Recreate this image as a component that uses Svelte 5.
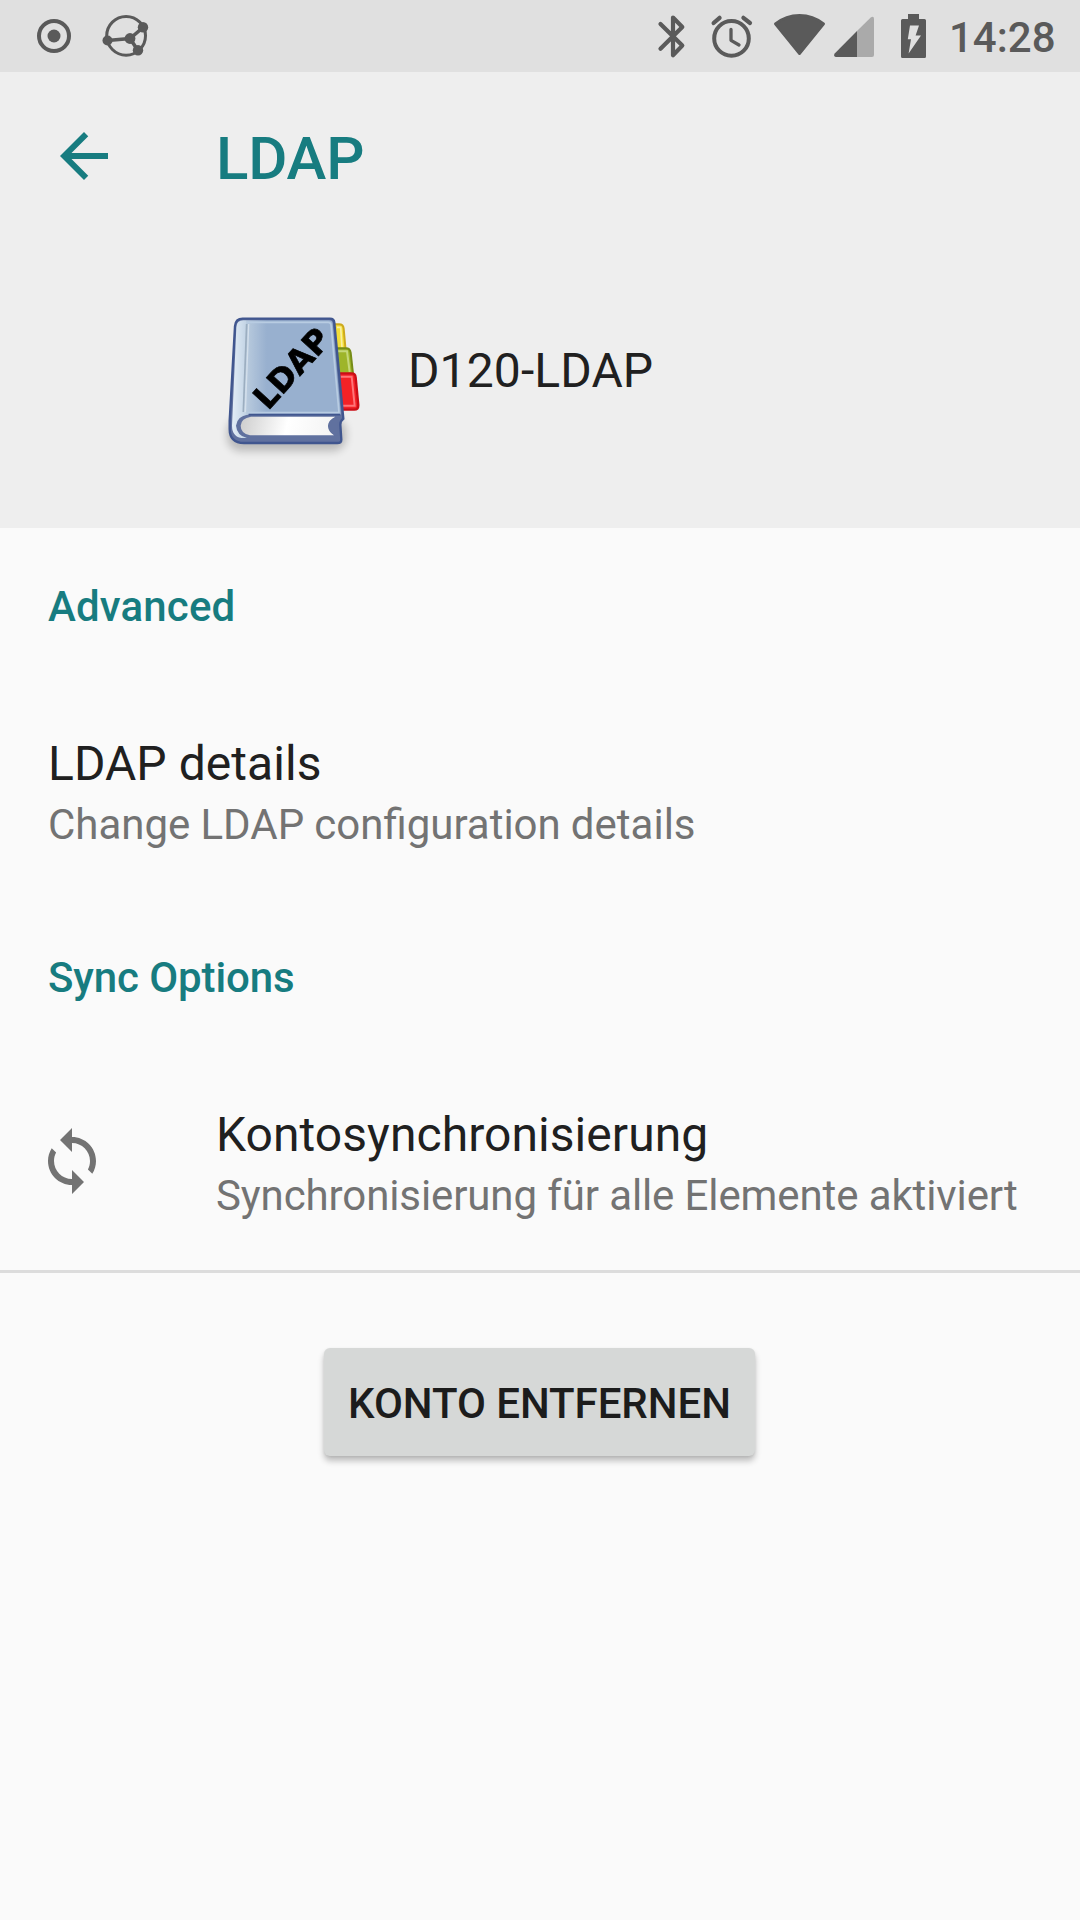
<script>
  const account = 'D120-LDAP';
</script>

<div class="screen">
  <header class="status">
    <div class="group">
      <svg class="dot" viewBox="36 0 36 72">
        <circle cx="54" cy="36" r="15" fill="none" stroke="#5a5a5a" stroke-width="4" />
        <circle cx="54" cy="36" r="6.5" fill="#5a5a5a" />
      </svg>
      <svg class="globe" viewBox="102 0 48 72" fill="none" stroke="#5a5a5a">
        <circle cx="126.1" cy="35.8" r="19.4" stroke-width="3" />
        <path d="M107.5 40.5L130 38.5L143 27.5M130 38.5L138 50.5" stroke-width="3.6" />
        <g fill="#5a5a5a" stroke="none">
          <circle cx="107.5" cy="40.5" r="5" />
          <circle cx="143" cy="27.3" r="5.2" />
          <circle cx="130" cy="38.5" r="5.4" />
          <circle cx="138" cy="50.3" r="5.2" />
        </g>
      </svg>
    </div>
    <div class="group">
      <svg class="bluetooth" viewBox="654 0 36 72">
        <path d="M660.5 24L682.3 45.6L673 55.2V17.6L682.3 26.9L660.5 48.8" fill="none" stroke="#5a5a5a" stroke-width="4.2" stroke-linecap="round" stroke-linejoin="round" />
      </svg>
      <svg class="alarm" viewBox="708 0 48 72" fill="none" stroke="#5a5a5a" stroke-linecap="round">
        <circle cx="731.5" cy="38.4" r="17.3" stroke-width="4" />
        <path d="M731 29.5V40.3L739 45" stroke-width="3.3" stroke-linejoin="round" />
        <path d="M713.6 23L719.6 17.8M743.4 17.8L750 23" stroke-width="4.2" />
      </svg>
      <svg class="wifi" viewBox="772 0 56 72">
        <path d="M775.4 23.9Q786 15.4 799.5 15.4T823.6 23.9L799.5 53.6Z" fill="#5a5a5a" stroke="#5a5a5a" stroke-width="2.8" stroke-linejoin="round" />
      </svg>
      <svg class="signal" viewBox="832 0 44 72">
        <path d="M857 31L870.7 17.4Q874 15.6 874 19V55Q874 57 872 57H857Z" fill="#aaa" />
        <path d="M857 31V57H835.8Q833 56 834.7 53.4Z" fill="#5a5a5a" />
      </svg>
      <svg class="battery" viewBox="900 0 28 72">
        <path d="M908 14H919V19H924.5Q926 19 926 20.5V56.5Q926 58 924.5 58H902.5Q901 58 901 56.5V20.5Q901 19 902.5 19H908Z" fill="#5a5a5a" />
        <path d="M910 25.5H919L915.6 35.5H921L908.6 53.5L911 39.2H907.8Z" fill="#e0e0e0" />
      </svg>
      <span class="time">14:28</span>
    </div>
  </header>

  <section class="head">
    <div class="toolbar">
      <svg class="icon" viewBox="0 0 24 24" fill="#177c80">
        <path d="M20 11H7.83l5.59-5.59L12 4l-8 8 8 8 1.41-1.41L7.83 13H20v-2z" />
      </svg>
      <h1>LDAP</h1>
    </div>
    <div class="account">
      <svg class="book" viewBox="0 0 600 540">
        <defs>
          <linearGradient id="cover" x1="100" x2="200" y1="0" y2="0" gradientUnits="userSpaceOnUse">
            <stop offset="0" stop-color="#e0ebf5" />
            <stop offset=".38" stop-color="#c3d4e5" />
            <stop offset=".4" stop-color="#b8cadd" />
            <stop offset="1" stop-color="#98b0cf" />
          </linearGradient>
          <linearGradient id="pages" x1="130" x2="390" y1="380" y2="440" gradientUnits="userSpaceOnUse">
            <stop offset="0" stop-color="#d0d0d0" />
            <stop offset=".5" stop-color="#ffffff" />
            <stop offset="1" stop-color="#f4f4f4" />
          </linearGradient>
          <filter id="shade" x="-20%" y="-60%" width="140%" height="220%"><feGaussianBlur stdDeviation="12" /></filter>
          <filter id="soft"><feGaussianBlur stdDeviation="2" /></filter>
        </defs>
        <rect x="82" y="385" width="356" height="98" rx="40" fill="#000" opacity=".22" filter="url(#shade)" />
        <g filter="url(#soft)">
          <path d="M398 103H417Q430 103 431 116L437 182H400Z" fill="#f2dd39" stroke="#cda91f" stroke-width="6" />
          <path d="M411 112L422 112L426 172" fill="none" stroke="#f9f0a0" stroke-width="5" />
          <path d="M402 175H438Q450 175 452 188L460 260H402Z" fill="#9eb52c" stroke="#768c17" stroke-width="6" />
          <path d="M412 184H441L449 246" fill="none" stroke="#c5d879" stroke-width="6" />
          <path d="M405 250H455Q466 250 467 262L475 346Q475 359 463 359H405Z" fill="#f32128" stroke="#cb1019" stroke-width="7" />
          <path d="M422 260H455L464 347H425" fill="none" stroke="#ff7478" stroke-width="6" />
          <path d="M128 86H390Q402 86 403 98L430 386Q421 392 421 404L424 449Q424 459 412 459H132Q89 459 89 417V392L105 108Q107 86 128 86Z" fill="#60719f" stroke="#40568f" stroke-width="7" />
          <path d="M130 91H387Q397 91 398 100L423 374H144Q111 378 108 407Q111 437 141 444Q96 448 96 407L109 112Q110 91 130 91Z" fill="url(#cover)" />
          <path d="M140 97H385Q392 97 393 104L417 368H142" fill="none" stroke="#b8cce2" stroke-width="5" />
          <path d="M140 102L130 366" fill="none" stroke="#9caec0" stroke-width="5" />
          <path d="M146 102L136 366" fill="none" stroke="#d4e0eb" stroke-width="4" />
          <path d="M146 374H421L425 382Q395 382 384 405Q384 429 406 438H146Q115 434 115 407Q117 379 146 374Z" fill="#60719f" />
          <path d="M146 374H421" fill="none" stroke="#40568f" stroke-width="5" />
          <path d="M153 380H406Q384 391 384 408Q385 426 402 436H150Q122 430 122 407Q123 385 153 380Z" fill="url(#pages)" />
          <path d="M409 382Q385 390 385 408Q387 430 413 438L414 393Z" fill="#60719f" />
          <text class="book-label" transform="translate(208 359) rotate(-47.5)" x="-6" y="0" textLength="286" lengthAdjust="spacingAndGlyphs">LDAP</text>
        </g>
      </svg>
      <span class="name">{account}</span>
    </div>
  </section>

  <main>
    <h2 class="advanced">Advanced</h2>
    <div class="row">
      <div>
        <div class="title">LDAP details</div>
        <div class="summary">Change LDAP configuration details</div>
      </div>
    </div>
    <h2>Sync Options</h2>
    <div class="row sync">
      <svg class="icon" viewBox="0 0 24 24" fill="#737373">
        <path d="M12 4V1L8 5l4 4V6c3.31 0 6 2.69 6 6 0 1.01-.25 1.97-.7 2.8l1.46 1.46C19.54 15.03 20 13.57 20 12c0-4.42-3.58-8-8-8zm0 14c-3.31 0-6-2.69-6-6 0-1.01.25-1.97.7-2.8L5.24 7.74C4.46 8.97 4 10.43 4 12c0 4.42 3.58 8 8 8v3l4-4-4-4v3z" />
      </svg>
      <div>
        <div class="title">Kontosynchronisierung</div>
        <div class="summary">Synchronisierung für alle Elemente aktiviert</div>
      </div>
    </div>
  </main>
  <footer>
    <button>KONTO ENTFERNEN</button>
  </footer>
</div>

<style>
  :global(body) {
    margin: 0;
    background: #fafafa;
  }
  .screen {
    width: 1080px;
    height: 1920px;
    overflow: hidden;
    background: #fafafa;
    font-family: Roboto, sans-serif;
    color: #202020;
    white-space: nowrap;
  }
  svg {
    display: block;
    flex: none;
  }
  .status {
    display: flex;
    justify-content: space-between;
    height: 72px;
    padding: 0 24px 0 36px;
    box-sizing: border-box;
    background: #e0e0e0;
  }
  .group {
    display: flex;
  }
  .group svg {
    height: 72px;
  }
  .dot { width: 36px; }
  .globe { width: 48px; margin-left: 30px; }
  .bluetooth { width: 36px; }
  .alarm { width: 48px; margin-left: 18px; }
  .wifi { width: 56px; margin-left: 16px; }
  .signal { width: 44px; margin-left: 4px; }
  .battery { width: 28px; margin-left: 24px; }
  .time {
    width: 107px;
    margin-left: 21px;
    padding-top: 13px;
    font-size: 42px;
    line-height: 49px;
    font-weight: 500;
    color: #5a5a5a;
  }
  .head {
    height: 456px;
    background: #eee;
  }
  .toolbar {
    display: flex;
    align-items: center;
    gap: 96px;
    height: 168px;
    padding-left: 48px;
  }
  .icon {
    width: 72px;
    height: 72px;
  }
  h1 {
    margin: 4px 0 0;
    font-size: 60px;
    line-height: 71px;
    font-weight: 500;
    letter-spacing: -0.2px;
    color: #177c80;
  }
  .account {
    display: flex;
    padding: 50px 0 0 200px;
  }
  .book {
    width: 200px;
    height: 180px;
  }
  .book-label {
    font: bold 98px 'DejaVu Sans', sans-serif;
    fill: #000;
    stroke: #000;
    stroke-width: 2px;
  }
  .name {
    margin: 52px 0 0 8px;
    font-size: 48px;
    line-height: 57px;
    letter-spacing: 0.12px;
  }
  main {
    padding: 54px 48px 60px;
    border-bottom: 3px solid #dcdcdc;
    height: 628px;
  }
  h2 {
    margin: 0;
    font-size: 42px;
    line-height: 49px;
    font-weight: 500;
    letter-spacing: -0.1px;
    color: #177c80;
  }
  .advanced {
    letter-spacing: 0.15px;
  }
  .row {
    display: flex;
    height: 218px;
    padding-top: 104px;
  }
  .sync {
    gap: 108px;
    margin-left: -12px;
  }
  .sync .icon {
    margin-top: 19px;
  }
  .title {
    font-size: 48px;
    line-height: 57px;
    letter-spacing: 0.06px;
  }
  .summary {
    margin-top: 8px;
    font-size: 42px;
    line-height: 49px;
    word-spacing: -0.3px;
    color: #737373;
  }
  .sync .summary {
    word-spacing: 0;
    letter-spacing: -0.11px;
  }
  footer {
    display: flex;
    justify-content: center;
    padding-top: 75px;
  }
  button {
    width: 431px;
    height: 108px;
    margin-right: 1px;
    padding: 2px 0 0;
    border: 0;
    border-radius: 6px;
    background: #d6d8d7;
    box-shadow: 0 5px 6px rgba(0, 0, 0, 0.24), 0 1px 3px rgba(0, 0, 0, 0.08);
    font: 500 42px/49px Roboto, sans-serif;
    letter-spacing: -0.05px;
    color: #1c1c1c;
  }
</style>
